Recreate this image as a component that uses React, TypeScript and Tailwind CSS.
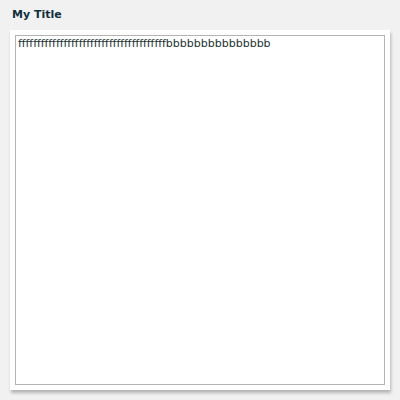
import React from "react";

const content = "f".repeat(39) + "b".repeat(15);

const App: React.FC = () => {
  return (
    <div className="w-[400px] h-[400px] bg-[#f1f1f1] px-[10px] pt-[8px] font-['DejaVu_Sans',Verdana,sans-serif]">
      <h1 className="h-[22px] pl-[2px] text-[11px] font-bold leading-[14px] text-[#0f2f3f]">
        My Title
      </h1>
      <div className="h-[360px] bg-white p-[5px] shadow-[1px_3px_3px_rgba(0,0,0,0.25)]">
        <div className="h-full border border-[#b4b4b4] px-[2px] pt-[1px] text-[11px] leading-[14px] text-[#1c3333]">
          {content}
        </div>
      </div>
    </div>
  );
};

export default App;
